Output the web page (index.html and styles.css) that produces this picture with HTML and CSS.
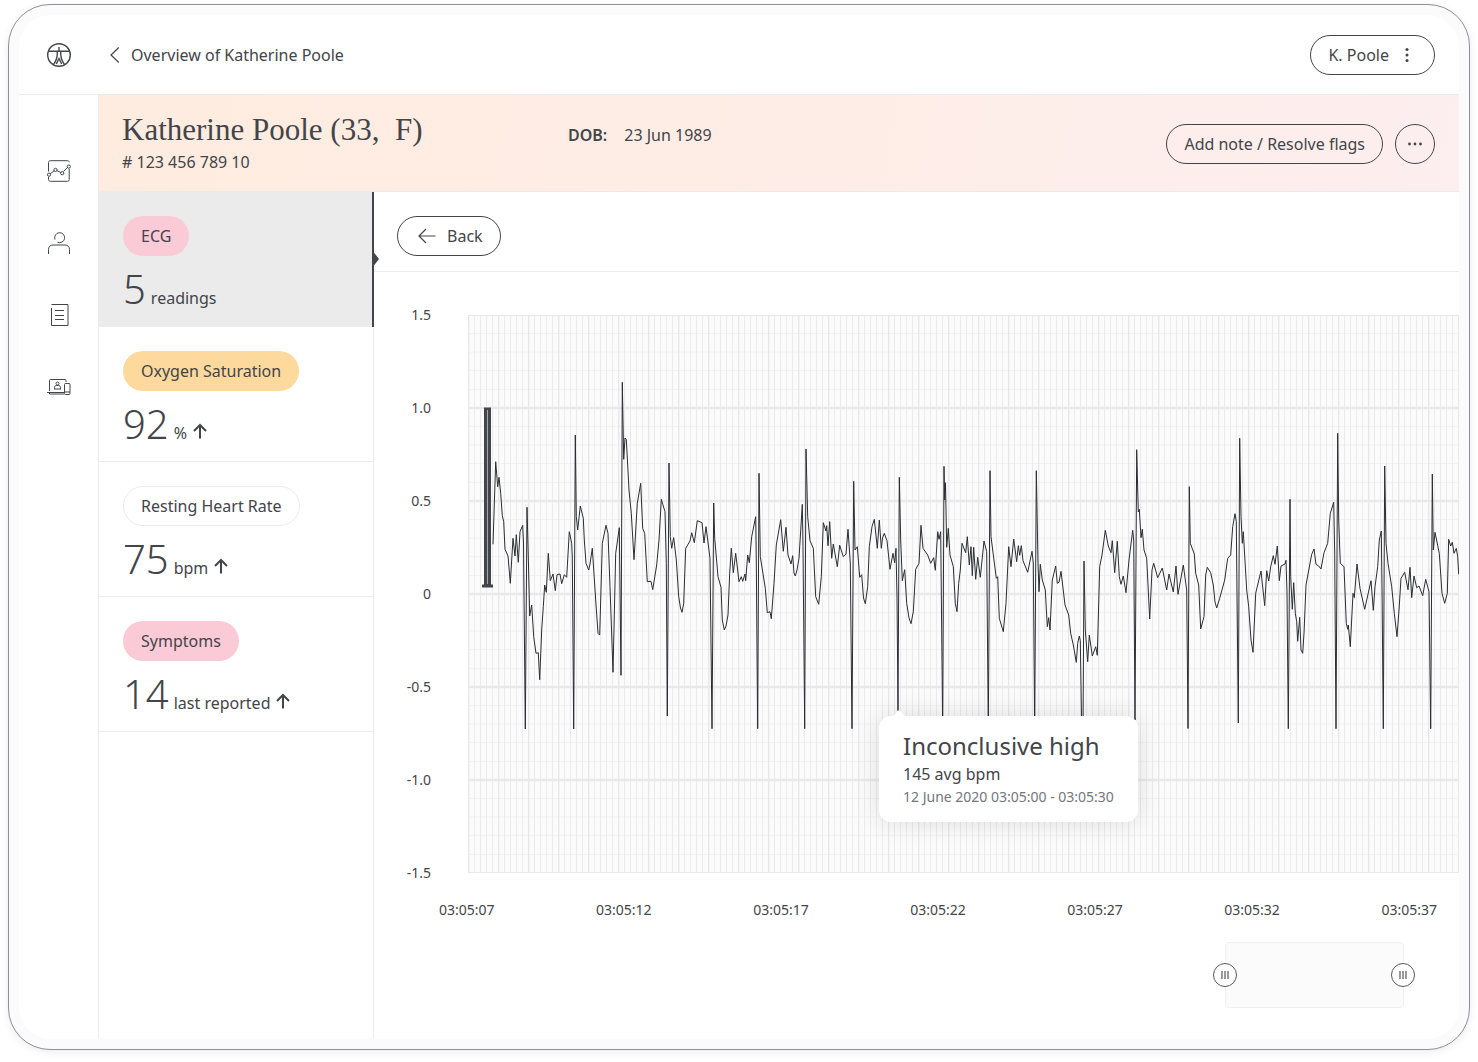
FILE: index.html
```html
<!DOCTYPE html>
<html lang="en">
<head>
<meta charset="utf-8">
<meta name="viewport" content="width=device-width, initial-scale=1">
<title>Overview of Katherine Poole</title>
<link rel="stylesheet" href="styles.css">
</head>
<body>
<div class="device">
<div class="screen">
  <header class="topbar">
    <a class="logo" href="#" aria-label="Home">
      <svg width="24" height="24" viewBox="0 0 24 24" fill="none" stroke="currentColor" stroke-width="1.4"><circle cx="12" cy="12" r="11.3"/><path d="M1.500 8.300h21M12 4v4.500M10.300 8.500c.3 5-.8 9-3.600 12.700M13.700 8.500c-.3 5 .8 9 3.600 12.700M9.300 21l2.700-5.500 2.700 5.500"/></svg>
    </a>
    <a class="crumb" href="#">
      <svg width="10" height="16" viewBox="0 0 10 16" fill="none" stroke="currentColor" stroke-width="1.2"><path d="M8.800.5L1 8l7.800 7.500"/></svg>
      Overview of Katherine Poole
    </a>
    <button class="btn user" type="button">K. Poole
      <svg width="4" height="14" viewBox="0 0 4 14" fill="currentColor"><circle cx="2" cy="1.500" r="1.500"/><circle cx="2" cy="7" r="1.500"/><circle cx="2" cy="12.500" r="1.500"/></svg>
    </button>
  </header>
  <div class="body">
    <nav class="rail" aria-label="Sections">
      <a href="#" aria-label="Trends">
        <svg width="24" height="24" viewBox="0 0 24 24" fill="none" stroke="currentColor"><path d="M1.500 12.500V3.500c0-1 .7-1.800 1.800-1.800h17.200c1 0 1.700.6 1.700 1.500M22.200 10v10.500c0 1-.7 1.800-1.800 1.800H3.300c-1.100 0-1.800-.8-1.800-1.800V18M3.200 14.800l4-3M9.800 11.500l4 2M16.500 12.500l4.200-4.300"/><circle cx="2" cy="15.700" r="1.600"/><circle cx="8.500" cy="10.900" r="1.600"/><circle cx="15.200" cy="14.200" r="1.600"/><circle cx="21.800" cy="7.600" r="1.600"/></svg>
      </a>
      <a href="#" aria-label="Patients">
        <svg width="24" height="24" viewBox="0 0 24 24" fill="none" stroke="currentColor"><path d="M10.500 11.200A5 5 0 1 0 8 8.500M1.500 23v-4.500c0-2.700 1.800-4.500 4.500-4.500h12c2.700 0 4.500 1.800 4.500 4.500V23"/></svg>
      </a>
      <a href="#" aria-label="Notes">
        <svg width="24" height="24" viewBox="0 0 24 24" fill="none" stroke="currentColor"><path d="M4.500 5v17.500h16.500V1.500H4.500M8 7.500h9M8 12.500h9M8 16.500h9"/></svg>
      </a>
      <a href="#" aria-label="Devices">
        <svg width="24" height="24" viewBox="0 0 24 24" fill="none" stroke="currentColor"><path d="M2.500 16V5.500c0-.6.400-1 1-1h14.500c.6 0 1 .4 1 1V7M0 17.500h17M2.500 17.500v1.500H17M7.500 14v-1.500c0-1.200.8-2 2-2h2c1.200 0 2 .8 2 2V14M7 14h7"/><circle cx="10.500" cy="8.500" r="1.500"/><rect x="17.500" y="8.500" width="5.500" height="11" rx="1"/><path d="M17.500 17h5.500"/></svg>
      </a>
    </nav>
    <div class="content">
      <section class="patient">
        <div class="identity">
          <h1>Katherine Poole (33,&nbsp; F)</h1>
          <p># 123 456 789 10</p>
        </div>
        <dl class="dob"><dt>DOB:</dt><dd>23 Jun 1989</dd></dl>
        <button class="btn" type="button">Add note / Resolve flags</button>
        <button class="btn more" type="button" aria-label="More">
          <svg width="14" height="4" viewBox="0 0 14 4" fill="currentColor"><circle cx="1.500" cy="2" r="1.400"/><circle cx="7" cy="2" r="1.400"/><circle cx="12.500" cy="2" r="1.400"/></svg>
        </button>
      </section>
      <div class="panels">
        <nav class="metrics" aria-label="Metrics">
          <a class="metric active" href="#">
            <span class="pill pink">ECG</span>
            <span class="reading"><span class="value">5</span><span class="unit">readings</span></span>
          </a>
          <a class="metric" href="#">
            <span class="pill amber">Oxygen Saturation</span>
            <span class="reading"><span class="value">92</span><span class="unit">%</span>
              <svg class="up" width="14" height="16" viewBox="0 0 14 16" fill="none" stroke="currentColor" stroke-width="2"><path d="M7 15.500V2M1 8l6-6 6 6"/></svg></span>
          </a>
          <a class="metric" href="#">
            <span class="pill plain">Resting Heart Rate</span>
            <span class="reading"><span class="value">75</span><span class="unit">bpm</span>
              <svg class="up" width="14" height="16" viewBox="0 0 14 16" fill="none" stroke="currentColor" stroke-width="2"><path d="M7 15.500V2M1 8l6-6 6 6"/></svg></span>
          </a>
          <a class="metric" href="#">
            <span class="pill pink">Symptoms</span>
            <span class="reading"><span class="value">14</span><span class="unit">last reported</span>
              <svg class="up" width="14" height="16" viewBox="0 0 14 16" fill="none" stroke="currentColor" stroke-width="2"><path d="M7 15.500V2M1 8l6-6 6 6"/></svg></span>
          </a>
        </nav>
        <main class="detail">
          <div class="toolbar">
            <button class="btn back" type="button">
              <svg width="18" height="16" viewBox="0 0 18 16" fill="none" stroke="currentColor" stroke-width="1.200"><path d="M17.500 8H1.500M8 1L1 8l7 7"/></svg>Back</button>
          </div>
          <div class="chart">
            <div class="yaxis"><span>1.5</span><span>1.0</span><span>0.5</span><span>0</span><span>-0.5</span><span>-1.0</span><span>-1.5</span></div>
            <div class="plot">
              <svg class="ecg" viewBox="468 315 991 558" preserveAspectRatio="none" role="img" aria-label="ECG trace">
                <defs>
                  <pattern id="rows" x="468" y="315" width="991" height="93" patternUnits="userSpaceOnUse"><path d="M0 18.500h991M0 37h991M0 55.500h991M0 74.500h991" stroke="#f2f2f2"/></pattern>
                  <pattern id="cols" x="468" y="315" width="30" height="558" patternUnits="userSpaceOnUse"><path d="M6.500 0v558M12.500 0v558M18.500 0v558M24.500 0v558" stroke="#ebebeb"/><path d="M.7 0v558" stroke="#e8e8e8" stroke-width="1.400"/></pattern>
                </defs>
                <rect x="468" y="315" width="991" height="558" fill="#fbfbfb"/>
                <rect x="468" y="315" width="991" height="558" fill="url(#rows)"/>
                <rect x="468" y="315" width="991" height="558" fill="url(#cols)"/>
                <path d="M468 408h991M468 501h991M468 594h991M468 687h991M468 780h991" stroke="#e9e9e9" stroke-width="2.500"/>
                <path d="M468 315.500h991M468 872.500h991M468.500 315v558M1458.500 315v558" stroke="#e8e8e8"/>
                <path d="M484 407.500h7v177h2v3h-11v-3h2z" fill="#43454a"/>
                <path d="M487.500 410v174" stroke="#a5a6a9"/>
                <polyline fill="none" stroke="#2c2d31" stroke-linejoin="round" points="493,544.300 495.700,461.700 497.700,486.700 499,477.300 500.700,493.300 502.300,515.700 503.700,521.700 505,549.300 508,556 510.300,583.300 513,538.300 515,556 516.300,534.700 518.300,562.300 520,531.700 522.700,525.300 523.500,543 525.300,729 527,507.300 528.300,557 529.700,616 531.700,605 533.700,636.700 536,653.300 538.300,652.700 539.700,679.700 541.700,630 543.300,606.700 544.700,585 546.300,592.300 548.300,553.300 550.300,580.700 553,574 555.300,590.700 557,574.700 560,574 561.700,583.700 564.300,574.700 566.700,577.300 569.300,531.700 571.700,543.300 572.300,557 573.700,729 575.300,435 576.300,516.700 577.700,530 580.300,506 583.300,518.300 584.300,540 586,563.300 588.700,570 590,564 592.300,548.300 595.700,600 598,633.300 599.700,635 600.700,600 602.300,543.300 606,525.300 608,533.300 610,586.700 613,672.300 615.700,553.300 619.300,527.700 621,675.300 622.300,382.300 623.700,459.300 625,438 626.300,439.300 629,490 631.300,513.300 634,559.700 637.300,503.300 640.700,483.300 642.700,528.300 644.700,533.300 647.300,581.700 651,581.300 652.700,589.700 656.700,565 659,540 661.300,499.300 665,511.700 666.300,563.300 667.300,716 669,463 670.300,536.700 671.700,548.300 673.700,537.700 676.300,560 678.700,596.700 680.500,608 682,612.300 683.700,603.300 685.700,548.300 690,541 691.700,532.700 694.300,542.700 697.300,520.700 702,522.700 704,543 706,526.700 710,558.300 712,728.700 713.700,503 714.700,538.300 718,576.700 721,587.300 722.300,620 724.300,630 726,626 728,615 729.700,573.300 731.300,548.300 733.300,572.700 735.700,553.300 739,581.700 741.300,576.700 742.700,581.300 745,574 745.700,580.700 747.700,555 749.300,562.700 751.700,536.700 755.700,516.700 756.300,563 757.700,728.700 759,473.300 760.300,556.700 765.300,588.300 767.300,612.700 770,611.700 771.300,618.700 774,583.300 776.300,545 780.700,519.700 783.300,551.300 786,527.300 788,555 791,564 792.700,555.700 794,573 795.300,576 797,570 799,558.300 802.300,504.300 803,546.700 804.700,728.700 806,449 807.700,516.700 810,540.700 813.300,548.300 815.700,596.700 818.700,604.300 821.300,576.700 823.300,522.700 826,531 826.700,525.700 828,545.700 829.700,521.700 831.700,558.300 833.300,544 837.300,566.700 839.700,545.300 843.300,556.700 846,554 848,529.300 850.300,563 852,728.700 853.700,481.300 855,550 857.300,546.700 859.700,577.300 861.700,574.700 863.500,598 865.300,603.700 867.700,586.700 869.300,546.700 872,526.700 874.300,519.300 877.300,548.300 879.300,520 881.300,548.300 882.500,538 884.300,533.300 887,540.700 890,569.300 893,553.300 894.700,562.700 896,548.300 897,597 898,710.700 899.300,477.300 900.700,540 902.300,580.700 904.700,569.700 906.700,603.300 909,618 911,623.700 913.300,611.700 915.700,569.300 919,563.300 921,525.300 923,548.300 927.700,555 930.700,563.300 933.700,557.700 935.300,570.300 937.700,531.700 939,539.300 940.700,531.700 942.700,730 944,466.300 944.700,500 945.500,482.700 946.700,547.300 948.300,528.300 950,555 953.300,566.700 955.300,603.300 957,611.700 958.700,583.300 960.300,570 962,543.300 965.700,552.700 967.300,536.700 969.300,565 971,546.700 972.300,575.700 973.700,547.300 975.700,579.300 977.700,557.300 980.300,577.300 984,541 986.700,551.700 988.300,730 990,470.700 991,536.700 996.300,578.300 997.700,576.700 999.300,618.300 1003.300,631.700 1006,603.300 1008.700,546.700 1011,566.700 1013.700,539 1016.700,561.700 1018.300,545.700 1019.700,555.300 1021.300,545.700 1023,560.700 1027.700,572.300 1032,551.300 1033.300,563 1034.700,730 1036.300,470.700 1038,563.300 1039,591.700 1040.300,564.300 1042.300,580 1045.300,590 1047.300,626.700 1048.700,617.700 1050,630 1052.300,580 1055.700,566 1057.300,583.300 1059,582.300 1061,571.300 1065,605 1068.700,615 1070.700,633.300 1073.300,645 1076.300,662.300 1077.700,643.300 1079.300,636 1080.300,640.700 1081.700,730 1083,730 1084,561 1085.300,630 1087.700,661.700 1089.300,635 1092.300,656 1095.700,646.700 1097.300,655.300 1099.700,566.700 1102,555 1105.300,530.300 1108.300,546 1111,552.700 1112.300,540.700 1114.700,572.700 1117.300,541.300 1119.300,576.700 1121,584.300 1123.300,576 1126,592.700 1129,560 1132.700,530.300 1133.700,540 1135,720 1136.700,449.700 1138.300,512 1139.300,509.300 1141,537.700 1142.300,529.300 1144,550 1146.700,558.300 1149.700,619 1152,570 1153.700,563.300 1157.700,577.700 1162.300,568 1166.700,590 1169,574 1173.300,592 1176,566 1178,594.300 1183.300,565 1186.700,590 1188,728.500 1189.300,486.700 1190.300,543.300 1194.300,554 1195.700,573.300 1198.700,585 1200.700,629 1204,616.700 1205.700,575 1207.300,567.300 1210.700,572.700 1213.300,585 1215,602 1216.700,608 1219.700,598.300 1224.700,580 1227.700,558.300 1230.700,555 1232.700,526.700 1235,513.700 1236.300,521.700 1238.300,723 1239.700,438.300 1241,516.700 1242.300,543.300 1243.300,531.700 1246.700,590 1248.700,606.700 1251,640 1253,652.300 1255.700,593.300 1261,571 1264.700,605.700 1266.700,570.700 1268.700,581 1270.700,566.700 1273.300,555.700 1275,564.300 1277.300,546 1279.300,580.700 1281,566 1285,564 1286,560.300 1287,593 1288.300,728.700 1290,499.300 1290.700,576.700 1292.300,609.300 1293.700,582.700 1295.300,613.300 1296.700,621.700 1297.700,641.300 1299.700,617.300 1301,650 1302.700,653.300 1304,633.300 1306,585 1311.700,554.300 1314,549 1316,564.300 1318.700,566 1321,569 1324,552.700 1327.700,543.300 1330.300,513.300 1333.700,502.300 1334.700,553 1336,728.700 1337.700,433.300 1338.700,520 1340.300,563.300 1344,566.700 1346.300,623.300 1347.700,629.300 1348.300,625 1350.300,646.700 1353,593.300 1354.300,597.700 1357,564 1360,588.300 1364.700,609.300 1371,580.700 1373.300,610.300 1375,586.700 1377.700,566.700 1379.300,540 1381.300,531 1382,587 1383.300,728.700 1384.700,466 1386,543.300 1388,563.300 1391.700,586.700 1394.300,613.300 1397,636.700 1399,610 1401,578.300 1404.700,572.300 1408,589.700 1410,567.300 1411.700,597.700 1414,576 1416.700,587.700 1419,586 1422.700,595.700 1425.700,579.300 1429,591.700 1430.700,728.700 1432.300,474 1433.300,550 1435,532.300 1439.300,553.300 1442,593.300 1444.700,603.300 1447.300,593.300 1448.700,539.300 1450.700,546 1452.300,542.300 1454,553.300 1456.300,548.300 1457.700,556.700 1458.700,574.300"/>
              </svg>
              <div class="tip" role="tooltip">
                <strong>Inconclusive high</strong>
                <span>145 avg bpm</span>
                <time>12 June 2020 03:05:00 - 03:05:30</time>
              </div>
            </div>
          </div>
          <div class="xaxis"><span>03:05:07</span><span>03:05:12</span><span>03:05:17</span><span>03:05:22</span><span>03:05:27</span><span>03:05:32</span><span>03:05:37</span></div>
          <div class="brush">
            <input type="range" min="0" max="100" value="0" aria-label="Range start">
            <input type="range" min="0" max="100" value="100" aria-label="Range end">
          </div>
        </main>
      </div>
    </div>
  </div>
</div>
</div>
</body>
</html>
```
FILE: styles.css
```css
* { box-sizing: border-box; }

body {
  margin: 0;
  min-height: 100vh;
  padding: 4px 8px 12px;
  display: flex;
  background: #fff;
  color: #434549;
  font: 16px/24px "Noto Sans", sans-serif;
}

h1, p, dl, dd { margin: 0; }
a { color: inherit; text-decoration: none; }
svg { display: block; flex: none; }

.device {
  flex: 1;
  min-width: 0;
  display: flex;
  padding: 10px;
  border: 1px solid #8f9095;
  border-radius: 42px;
  background: #fbfbfc;
  box-shadow: 0 2px 8px rgba(0, 0, 0, 0.08);
}

.screen {
  flex: 1;
  min-width: 0;
  display: flex;
  flex-direction: column;
  border-radius: 32px;
  background: #fff;
  overflow: hidden;
}

.topbar {
  display: flex;
  align-items: center;
  height: 80px;
  padding: 0 24px 0 28px;
  border-bottom: 1px solid #ebebeb;
}

.crumb {
  display: flex;
  align-items: center;
  gap: 11px;
  margin-left: 39px;
}

.btn {
  display: flex;
  align-items: center;
  justify-content: center;
  height: 40px;
  padding: 0 17px;
  border: 1px solid #434549;
  border-radius: 20px;
  background: none;
  color: inherit;
  font: inherit;
  cursor: pointer;
}

.user { margin-left: auto; gap: 16px; padding-right: 25px; }

.body { flex: 1; display: flex; }

.rail {
  width: 80px;
  display: flex;
  flex-direction: column;
  align-items: center;
  gap: 48px;
  padding-top: 64px;
  border-right: 1px solid #ebebeb;
}

.content {
  flex: 1;
  min-width: 0;
  display: flex;
  flex-direction: column;
}

.patient {
  display: flex;
  align-items: center;
  height: 97px;
  padding: 2px 24px 0 23px;
  border-bottom: 1px solid #ebebeb;
  background: linear-gradient(100deg, #ffece0, #feede6 50%, #fdeeef);
}

.identity { width: 446px; margin-bottom: 4px; }
.identity h1 {
  font: 31px/40px "Liberation Serif", serif;
  white-space: nowrap;
}

.dob {
  display: flex;
  gap: 17px;
  margin: 0 auto 18px 0;
}
.dob dt { font-weight: 600; }

.more { width: 40px; padding: 0; margin-left: 12px; }

.panels { flex: 1; display: flex; }

.metrics { width: 275px; border-right: 1px solid #ebebeb; }

.metric {
  position: relative;
  display: flex;
  flex-direction: column;
  align-items: flex-start;
  height: 135px;
  padding: 24px 24px 0;
  border-bottom: 1px solid #ebebeb;
}

.active {
  margin-right: -1px;
  border-right: 2px solid #434549;
  border-bottom-width: 0;
  background: #ebebeb;
}
.active::after {
  content: "";
  position: absolute;
  left: 100%;
  top: 58px;
  border: solid transparent;
  border-width: 9px 0 9px 7px;
  border-left-color: #434549;
}

.pill {
  height: 40px;
  padding: 7px 17px;
  border: 1px solid transparent;
  border-radius: 20px;
}
.pink { background: #fbcad7; }
.amber { background: #fed99d; }
.plain { border-color: #ebebeb; background: #fff; }

.reading {
  display: flex;
  align-items: baseline;
  gap: 5px;
  padding-top: 5px;
}
.value { font-size: 40px; line-height: 56px; font-weight: 300; }
.up { margin: 0 0 -2px 1px; }

.detail { flex: 1; min-width: 0; }

.toolbar {
  height: 80px;
  padding: 24px 23px 0;
  border-bottom: 1px solid #ebebeb;
}
.back { gap: 11px; padding-left: 20px; }

.chart {
  display: flex;
  gap: 37px;
  padding-top: 33px;
  font-size: 14px;
  line-height: 20px;
}
.yaxis {
  width: 57px;
  display: flex;
  flex-direction: column;
  justify-content: space-between;
  text-align: right;
}
.plot {
  position: relative;
  flex: 1;
  min-width: 0;
  padding: 10px 0;
}
.ecg { width: 100%; height: 558px; }

.tip {
  position: absolute;
  left: 411px;
  top: 411px;
  display: flex;
  flex-direction: column;
  padding: 14px 24px;
  border-radius: 12px;
  background: #fff;
  box-shadow: 0 0 24px rgba(0, 0, 0, 0.12);
  white-space: nowrap;
}
.tip::before {
  content: "";
  position: absolute;
  left: 14px;
  top: -6px;
  border: solid transparent;
  border-width: 0 6px 6px;
  border-bottom-color: #fff;
}
.tip strong { font-size: 24px; line-height: 32px; font-weight: 400; }
.tip span { font-size: 16px; line-height: 24px; }
.tip time { line-height: 22px; color: #74767b; }

.xaxis {
  display: flex;
  justify-content: space-between;
  padding: 17px 22px 0 65px;
  font-size: 14px;
  line-height: 20px;
}

.brush {
  position: relative;
  width: 179px;
  height: 66px;
  margin: 22px 55px 24px auto;
  border: 1px solid #f0f0f0;
  border-radius: 4px;
  background: #fbfbfb;
}
.brush input {
  position: absolute;
  left: -13px;
  top: 20px;
  width: 202px;
  height: 24px;
  margin: 0;
  appearance: none;
  background: none;
  pointer-events: none;
}
.brush input::-webkit-slider-thumb {
  appearance: none;
  width: 24px;
  height: 24px;
  border: 1px solid #55575b;
  border-radius: 50%;
  background: repeating-linear-gradient(90deg, #999 0 2px, #fff 2px 3px) center / 8px 8px no-repeat #fff;
  pointer-events: auto;
}
```
